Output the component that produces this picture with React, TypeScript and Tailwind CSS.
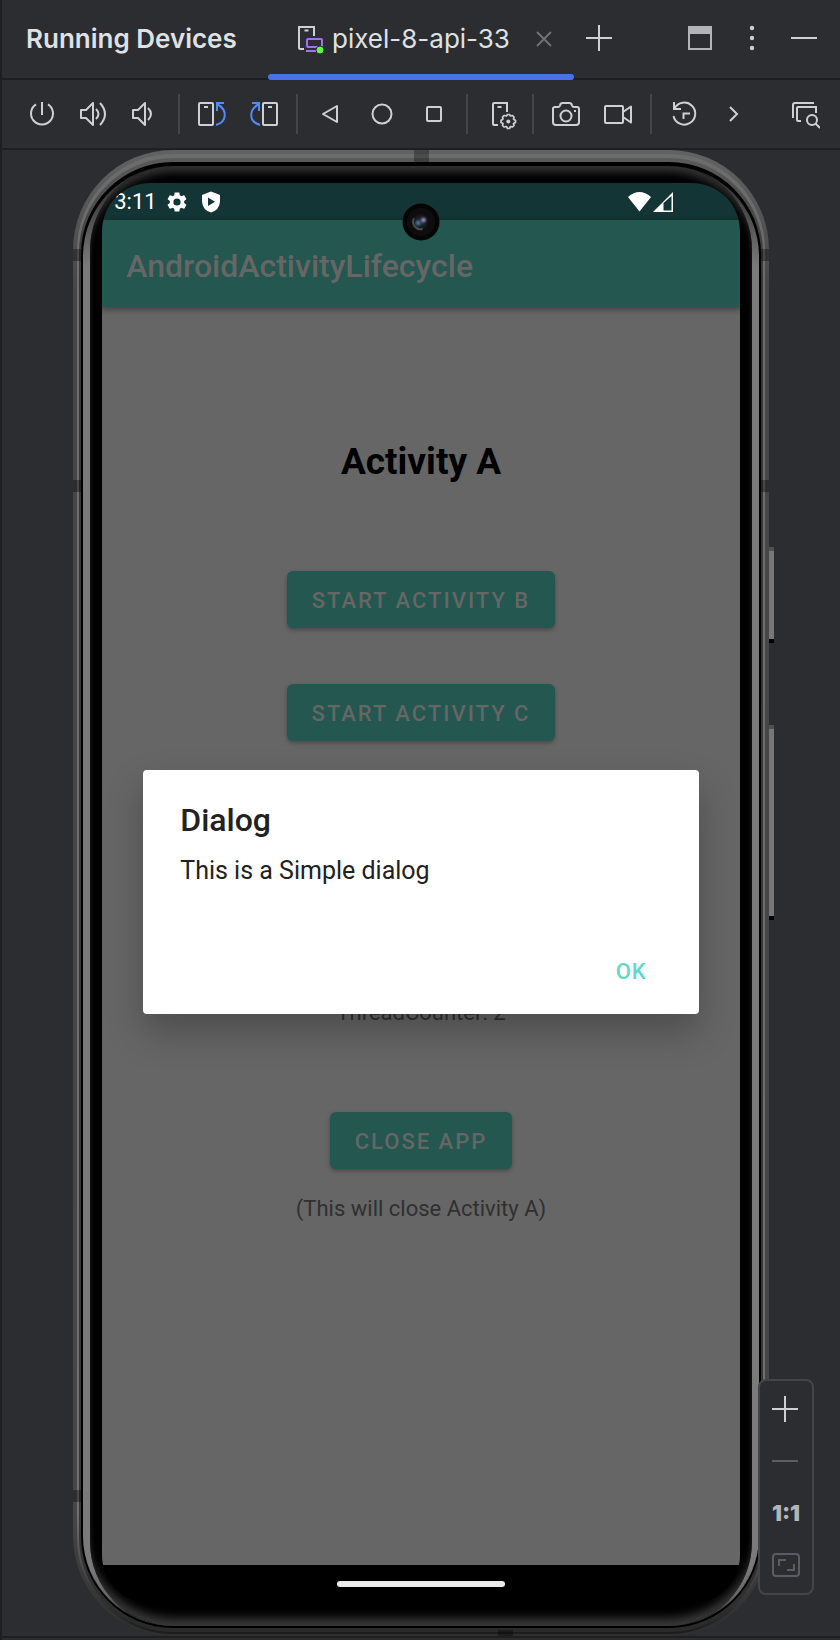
import React from "react";

function Icon({ children }: { children: React.ReactNode }) {
  return (
    <svg viewBox="0 0 32 32" className="size-8 shrink-0" fill="none" stroke="#ced0d6" strokeWidth="2" aria-hidden="true">
      {children}
    </svg>
  );
}

function ToolButton({ label, children }: { label: string; children: React.ReactNode }) {
  return (
    <button type="button" aria-label={label} className="flex size-8 shrink-0 items-center justify-center">
      <Icon>{children}</Icon>
    </button>
  );
}

function Divider() {
  return <div className="h-10 w-0.5 shrink-0 bg-[#43454a]" />;
}

function Header() {
  return (
    <header className="flex h-20 items-stretch border-b-2 border-[#1e1f22] pl-6">
      <h1 className="flex w-[242px] shrink-0 items-center pb-0.5 text-[26px] font-semibold text-[#dfe1e5]">Running Devices</h1>
      <div className="-mb-0.5 flex h-20 w-[306px] shrink-0 flex-col">
        <div className="flex flex-1 items-center pl-6 pt-0.5">
          <svg viewBox="0 0 32 32" className="size-8 shrink-0" fill="none" strokeWidth="2" aria-hidden="true">
            <path d="M12 27H8.500Q7 27 7 25.500V5H22V14" stroke="#ced0d6" />
            <path d="M12.500 8.500H16.500" stroke="#ced0d6" />
            <rect x="15" y="17" width="15" height="8" rx="1" stroke="#a571e6" />
            <path d="M14 29H25" stroke="#a571e6" />
            <circle cx="28" cy="28" r="4" fill="#5ffb43" stroke="#2b2d30" strokeWidth="1" />
          </svg>
          <span className="pl-2 text-[26px] text-[#dfe1e5]">pixel-8-api-33</span>
          <button type="button" aria-label="Close tab" className="ml-[18px] flex size-8 items-center justify-center">
            <svg viewBox="0 0 32 32" className="size-8" stroke="#6f737a" strokeWidth="1.8" aria-hidden="true">
              <path d="M9 10L23 24M23 10L9 24" />
            </svg>
          </button>
        </div>
        <div className="h-1.5 rounded-full bg-[#4574e8]" />
      </div>
      <div className="flex flex-1 items-center pl-2 pr-5">
        <ToolButton label="Add device">
          <path d="M17 2V28M4 15H30" />
        </ToolButton>
        <div className="ml-auto flex items-center gap-5">
          <button type="button" aria-label="Window mode" className="size-8">
            <Icon>
              <path d="M4 3H28V11H4Z" fill="#b4b5b7" stroke="none" />
              <rect x="5" y="4" width="22" height="22" stroke="#b4b5b7" />
            </Icon>
          </button>
          <ToolButton label="Options">
            <g fill="#ced0d6" stroke="none">
              <circle cx="16" cy="5" r="2.200" />
              <circle cx="16" cy="15" r="2.200" />
              <circle cx="16" cy="25" r="2.200" />
            </g>
          </ToolButton>
          <ToolButton label="Hide">
            <path d="M3 15H29" />
          </ToolButton>
        </div>
      </div>
    </header>
  );
}

function Toolbar() {
  return (
    <div className="flex h-[70px] items-center border-b-2 border-[#1e1f22] pl-6 pr-5">
      <div className="flex gap-5">
        <ToolButton label="Power">
          <path d="M16 4V17M10 6.300A11 11 0 1 0 22 6.300" />
        </ToolButton>
        <ToolButton label="Volume up">
          <path d="M3 12H8L15 5V27L8 20H3Z" strokeLinejoin="round" />
          <path d="M18 11Q23 16 18 21M22 5Q32 16 22 27" />
        </ToolButton>
        <ToolButton label="Volume down">
          <path d="M3 12H8L15 5V27L8 20H3Z" strokeLinejoin="round" />
          <path d="M18 10Q24 16 18 22" />
        </ToolButton>
      </div>
      <div className="ml-4"><Divider /></div>
      <div className="ml-4 flex gap-5">
        <ToolButton label="Rotate left">
          <rect x="3" y="5" width="14" height="22" rx="1" />
          <path d="M8 9H12" />
          <path d="M20 27C31 24 32 12 21 6M21 13V5H28" stroke="#548af7" />
        </ToolButton>
        <ToolButton label="Rotate right">
          <rect x="15" y="5" width="14" height="22" rx="1" />
          <path d="M20 9H24" />
          <path d="M12 27C1 24 0 12 11 6M11 13V5H4" stroke="#548af7" />
        </ToolButton>
      </div>
      <div className="ml-4"><Divider /></div>
      <div className="ml-4 flex gap-5">
        <ToolButton label="Back">
          <path d="M23 8V24L9 16Z" strokeLinejoin="round" />
        </ToolButton>
        <ToolButton label="Home">
          <circle cx="16" cy="16" r="9.500" />
        </ToolButton>
        <ToolButton label="Overview">
          <rect x="9" y="9" width="14" height="14" rx="1" />
        </ToolButton>
      </div>
      <div className="ml-4"><Divider /></div>
      <div className="ml-[18px]">
        <ToolButton label="Device settings">
          <path d="M12 27H8Q7 27 7 26V6Q7 5 8 5H21V14" />
          <path d="M11.500 9H15.500" />
          <path d="M20.500 18L21.500 16.500H23.500L24.500 18L26.500 17.500L28 19L27.500 21L29.500 22.500V24.500L27.500 25.500L28 27.500L26.500 29L24.500 28.500L23.500 30.500H21.500L20.500 28.500L18 29L16.500 27.500L17 25.500L15 24.500V22.500L17 21L16.500 19L18 17.500Z" strokeWidth="1.700" strokeLinejoin="round" />
          <circle cx="22.300" cy="23.500" r="2" fill="#ced0d6" stroke="none" />
        </ToolButton>
      </div>
      <div className="ml-3.5"><Divider /></div>
      <div className="ml-4 flex gap-5">
        <ToolButton label="Screenshot">
          <path d="M3 11Q3 9 5 9H8Q9.500 9 10 7.500Q10.500 5 12.500 5H19.500Q21.500 5 22 7.500Q22.500 9 24 9H27Q29 9 29 11V24Q29 27 26 27H6Q3 27 3 24Z" />
          <circle cx="16" cy="18" r="5.500" />
          <path d="M24 13H26" />
        </ToolButton>
        <ToolButton label="Record">
          <rect x="3" y="8" width="18" height="17" rx="1" />
          <path d="M21 14L29 8.500V24.500L21 19" strokeLinejoin="round" />
        </ToolButton>
      </div>
      <div className="ml-4"><Divider /></div>
      <div className="ml-4 flex gap-[18px]">
        <ToolButton label="Snapshots">
          <path d="M6 4V11H13M6.500 10.500A11 11 0 1 1 5.500 18M22 15.500H15.500V21" />
        </ToolButton>
        <ToolButton label="More">
          <path d="M12 9L19 16L12 23" />
        </ToolButton>
      </div>
      <div className="ml-auto">
        <ToolButton label="Device inspector">
          <path d="M5 20V7Q5 5 7 5H26M13 23H10Q9 23 9 22V10Q9 9 10 9H28V15" />
          <circle cx="24" cy="22" r="5" />
          <path d="M27.500 25.500L32 30" />
        </ToolButton>
      </div>
    </div>
  );
}

function StatusBar() {
  return (
    <div className="flex h-[37px] items-center bg-[#143536] pl-3 pr-[66px] text-white">
      <span className="text-[22px]">3:11</span>
      <svg viewBox="2 2 20 20" className="ml-2.5 size-5" fill="#fff" aria-hidden="true">
        <path d="M19.140 12.940c.04-.3.06-.61.06-.94 0-.32-.02-.64-.07-.94l2.030-1.580c.18-.14.23-.41.12-.61l-1.920-3.320c-.12-.22-.37-.29-.59-.22l-2.390.96c-.5-.38-1.030-.7-1.620-.94l-.36-2.540c-.04-.24-.24-.41-.48-.41h-3.840c-.24 0-.43.17-.47.41l-.36 2.540c-.59.24-1.130.57-1.620.94l-2.390-.96c-.22-.08-.47 0-.59.22L2.740 8.870c-.12.21-.08.47.12.61l2.030 1.580c-.05.3-.09.63-.09.94s.02.64.07.94l-2.030 1.580c-.18.14-.23.41-.12.61l1.920 3.320c.12.22.37.29.59.22l2.390-.96c.5.38 1.030.7 1.620.94l.36 2.540c.05.24.24.41.48.41h3.840c.24 0 .44-.17.47-.41l.36-2.540c.59-.24 1.130-.56 1.620-.94l2.390.96c.22.08.47 0 .59-.22l1.920-3.320c.12-.22.07-.47-.12-.61zM12 15.600a3.600 3.600 0 1 1 0-7.200 3.600 3.600 0 0 1 0 7.200z" />
      </svg>
      <svg viewBox="0 0 18 22" className="ml-[15px] h-[22px] w-[18px]" aria-hidden="true">
        <path d="M9 0.500L18 4V10.500Q17.500 19 9 21.500Q.5 19 0 10.500V4Z" fill="#fff" />
        <path d="M6 6.500V15L13 10.700Z" fill="#143536" />
      </svg>
      <svg viewBox="0 0 46 20" className="ml-auto h-5 w-[46px]" aria-hidden="true">
        <path d="M0 5Q11.500-5 23 5L11.500 19.500Z" fill="#fff" />
        <path d="M25 20L45 0V20ZM35.500 11V18.500H43.500V4Z" fill="#fff" fillRule="evenodd" />
      </svg>
    </div>
  );
}

function Camera() {
  return (
    <svg viewBox="0 0 38 38" className="absolute left-1/2 top-5 size-[38px] -translate-x-1/2" aria-hidden="true">
      <defs>
        <radialGradient id="lens">
          <stop offset="0" stopColor="#2c3850" />
          <stop offset=".6" stopColor="#191d28" />
          <stop offset="1" stopColor="#111" />
        </radialGradient>
        <radialGradient id="glintBlue">
          <stop offset="0" stopColor="#4b7d98" />
          <stop offset="1" stopColor="#4b7d98" stopOpacity="0" />
        </radialGradient>
        <radialGradient id="glintViolet">
          <stop offset="0" stopColor="#b596cc" />
          <stop offset="1" stopColor="#8b6fa5" stopOpacity="0" />
        </radialGradient>
      </defs>
      <circle cx="19" cy="19" r="18.500" fill="#050505" />
      <circle cx="19" cy="19" r="14" fill="#0d0d0d" />
      <circle cx="18.500" cy="19" r="8" fill="url(#lens)" />
      <path d="M11.500 16A7.500 7.500 0 0 0 20 26" fill="none" stroke="#4a4a4a" strokeWidth="2" strokeLinecap="round" />
      <circle cx="16" cy="20" r="4" fill="url(#glintBlue)" />
      <circle cx="21.500" cy="17" r="4" fill="url(#glintViolet)" />
    </svg>
  );
}

function MaterialButton({ children }: { children: React.ReactNode }) {
  return (
    <button
      type="button"
      className="h-[57px] rounded-md bg-[#23574f] px-[25px] pt-0.5 text-[22px] font-medium tracking-[2px] text-[#666] shadow-[0_2px_4px_rgba(0,0,0,0.3)]"
    >
      {children}
    </button>
  );
}

function Dialog() {
  return (
    <div
      role="dialog"
      aria-labelledby="dialog-title"
      className="absolute inset-x-[41px] top-[587px] flex h-[244px] flex-col rounded-sm bg-white pl-[37px] pr-[52px] pt-8 text-[#212121] shadow-[0_18px_36px_rgba(0,0,0,0.25)]"
    >
      <h3 id="dialog-title" className="text-[32px]/9 font-medium">Dialog</h3>
      <p className="pt-[17px] text-[25px]/8">This is a Simple dialog</p>
      <button type="button" className="mt-auto mb-6 self-end text-[22px]/9 font-medium tracking-[1px] text-[#5fdac9]">
        OK
      </button>
    </div>
  );
}

function Screen() {
  return (
    <div className="relative flex flex-1 flex-col overflow-hidden rounded-[48px] bg-black">
      <StatusBar />
      <div className="z-0 flex h-[87px] items-center bg-[#23574f] pl-6 pt-1 text-[32px] font-medium text-[#666] shadow-[0_2px_6px_rgba(0,0,0,0.3)]">
        AndroidActivityLifecycle
      </div>
      <main className="flex flex-1 flex-col items-center bg-[linear-gradient(to_bottom,#5c5c5c,#666_8px)] pt-[131px]">
        <h2 className="text-[37px]/12 font-bold text-black">Activity A</h2>
        <div className="flex flex-col items-center gap-14 pt-[85px]">
          <MaterialButton>START ACTIVITY B</MaterialButton>
          <MaterialButton>START ACTIVITY C</MaterialButton>
        </div>
        <p className="pt-64 text-[22px]/8 text-[#303030]">ThreadCounter: 2</p>
        <div className="flex flex-col items-center gap-6 pt-[83px]">
          <MaterialButton>CLOSE APP</MaterialButton>
          <p className="text-[22px]/8 text-[#303030]">(This will close Activity A)</p>
        </div>
      </main>
      <div className="flex h-[38px] items-center justify-center bg-black">
        <div className="h-1.5 w-42 rounded-full bg-[#ececec]" />
      </div>
      <Camera />
      <Dialog />
    </div>
  );
}

function AntennaBands() {
  return (
    <>
      <div className="absolute left-[49%] top-0 h-3 w-[15px] bg-black/30" />
      <div className="absolute left-0 top-[99px] h-3 w-2.5 bg-black/35" />
      <div className="absolute right-0 top-[99px] h-3 w-2.5 bg-black/35" />
      <div className="absolute left-0 top-[330px] h-3 w-2.5 bg-black/35" />
      <div className="absolute right-0 top-[330px] h-3 w-2.5 bg-black/35" />
      <div className="absolute bottom-[134px] left-0 h-3 w-2.5 bg-black/35" />
      <div className="absolute bottom-0 left-[61%] h-1.5 w-[15px] bg-black/35" />
    </>
  );
}

function Phone() {
  return (
    <div className="relative mx-auto flex w-[83%] flex-1 flex-col font-['Roboto',sans-serif]">
      <div className="absolute -right-[5px] top-[397px] h-24 w-[5px] border-b-4 border-t-4 border-t-[#505050] border-b-black bg-[#777]" />
      <div className="absolute -right-[5px] top-[575px] h-[195px] w-[5px] border-b-4 border-t-4 border-t-[#505050] border-b-black bg-[#777]" />
      <div className="flex flex-1 flex-col rounded-[100px] bg-[linear-gradient(to_bottom,#626262_0,#464646_140px,#464646_calc(100%-120px),#2e2e2e_100%)] px-1 pt-1 pb-0.5">
        <div className="flex flex-1 flex-col rounded-[96px] bg-[linear-gradient(to_bottom,#6c6c6c_0,#707070_calc(100%-120px),#1c1c1c_100%)] px-0.5 pt-1 pb-0.5">
          <div className="flex flex-1 flex-col rounded-[94px] bg-[linear-gradient(to_bottom,#5a5a5a_0,#363636_120px,#363636_calc(100%-100px),#2a2a2a_100%)] px-0.5 pt-1 pb-1">
            <div className="flex flex-1 flex-col rounded-[92px] bg-black px-0.5 pt-1 pb-0.5">
              <div className="flex flex-1 flex-col rounded-[90px] bg-[linear-gradient(to_bottom,#222_0,#444_40px,#7a7a7a_100px,#7a7a7a_calc(100%-60px),#666_calc(100%-30px),#333_calc(100%-12px))] px-[7px]">
                <div className="flex flex-1 flex-col rounded-[84px] bg-black px-3 pt-[17px] pb-[23px] shadow-[inset_0_10px_8px_-4px_#333,inset_0_-12px_10px_-4px_#383838]">
                  <Screen />
                </div>
              </div>
            </div>
          </div>
        </div>
      </div>
      <AntennaBands />
    </div>
  );
}

function ZoomPanel() {
  return (
    <div className="absolute bottom-[45px] right-[26px] flex w-14 flex-col items-center gap-5 rounded-lg border-2 border-[#43454a] bg-[#2b2d30] py-3">
      <ToolButton label="Zoom in">
        <path d="M15 3V29M2 16H28" />
      </ToolButton>
      <ToolButton label="Zoom out">
        <path d="M2 16H28" stroke="#5a5d63" />
      </ToolButton>
      <button type="button" className="h-8 text-[22px] font-black text-[#b4b5b7] font-['Inter',sans-serif]">
        1:1
      </button>
      <ToolButton label="Fit to window">
        <g stroke="#5a5d63">
          <rect x="3" y="5" width="26" height="22" rx="3" />
          <path d="M9 17V11H16M17 21H24V15" />
        </g>
      </ToolButton>
    </div>
  );
}

export default function App() {
  return (
    <div className="flex min-h-screen flex-col border-l-2 border-[#1e1f22] bg-[#2b2d30] font-['Inter',sans-serif]">
      <Header />
      <Toolbar />
      <section className="relative flex min-h-[1490px] flex-1 flex-col pb-1">
        <Phone />
        <ZoomPanel />
        <div className="absolute inset-x-0 bottom-0 h-1 border-t-2 border-[#1e1f22]" />
      </section>
    </div>
  );
}
